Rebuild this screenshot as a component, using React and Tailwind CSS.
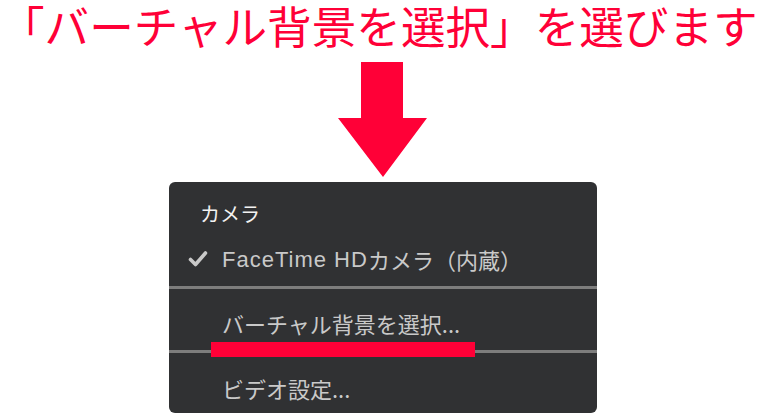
const jp = { fontFamily: '"Noto Sans CJK JP", "Noto Sans", sans-serif' };
const ui = { fontFamily: '"Liberation Sans", "Noto Sans CJK JP", sans-serif' };

const Arrow = () => (
  <svg width="90" height="116" viewBox="0 0 90 116" className="block">
    <polygon points="23,0 65,0 65,56 89,56 45,115 0,56 23,56" fill="#ff0037" />
  </svg>
);

export default function App() {
  return (
    <div className="w-[767px] h-[414px] bg-white overflow-hidden relative">
      {/* Heading */}
      <h1
        style={jp}
        className="text-[44.6px] leading-[50px] font-normal text-[#ff0037] whitespace-nowrap"
      >
        「バーチャル背景を選択」を選びます
      </h1>

      {/* Arrow */}
      <div className="ml-[338px] mt-[12px]">
        <Arrow />
      </div>

      {/* Menu */}
      <div
        style={ui}
        className="ml-[169px] mt-[4px] w-[428px] h-[231px] bg-[#303133] rounded-[6px] relative pt-[10px]"
      >
        <div className="h-[44px] flex items-center pl-[31px] text-[20px] text-[#f2f2f2]">
          <span style={jp}>カメラ</span>
        </div>
        <div className="h-[46px] flex items-center text-[22px] text-[#c9c9c9]">
          <span className="w-[53px] flex justify-end pr-[14px]">
            <svg width="20" height="16" viewBox="0 0 20 16">
              <path d="M2.5 8.5 L7.5 13.5 L17.5 2" fill="none" stroke="#c9c9c9" strokeWidth="3.6" strokeLinecap="round" strokeLinejoin="round" />
            </svg>
          </span>
          <span className="tracking-[1px]">FaceTime HD</span>
          <span style={jp}>カメラ（内蔵）</span>
        </div>
        <div className="h-[4px]" />
        <div className="h-[3px] bg-[#7d7d7d]" />
        <div className="h-[61px] pt-[7px] flex items-center pl-[53px] text-[22px] text-[#c9c9c9]">
          <span style={jp}>バーチャル背景を選択...</span>
        </div>
        <div className="h-[3px] bg-[#7d7d7d]" />
        <div className="h-[60px] pt-[10px] flex items-center pl-[53px] text-[22px] text-[#c9c9c9]">
          <span style={jp}>ビデオ設定...</span>
        </div>

        {/* Red underline annotation */}
        <div className="absolute left-[42px] top-[160px] w-[264px] h-[15px] bg-[#ff0037]" />
      </div>
    </div>
  );
}
